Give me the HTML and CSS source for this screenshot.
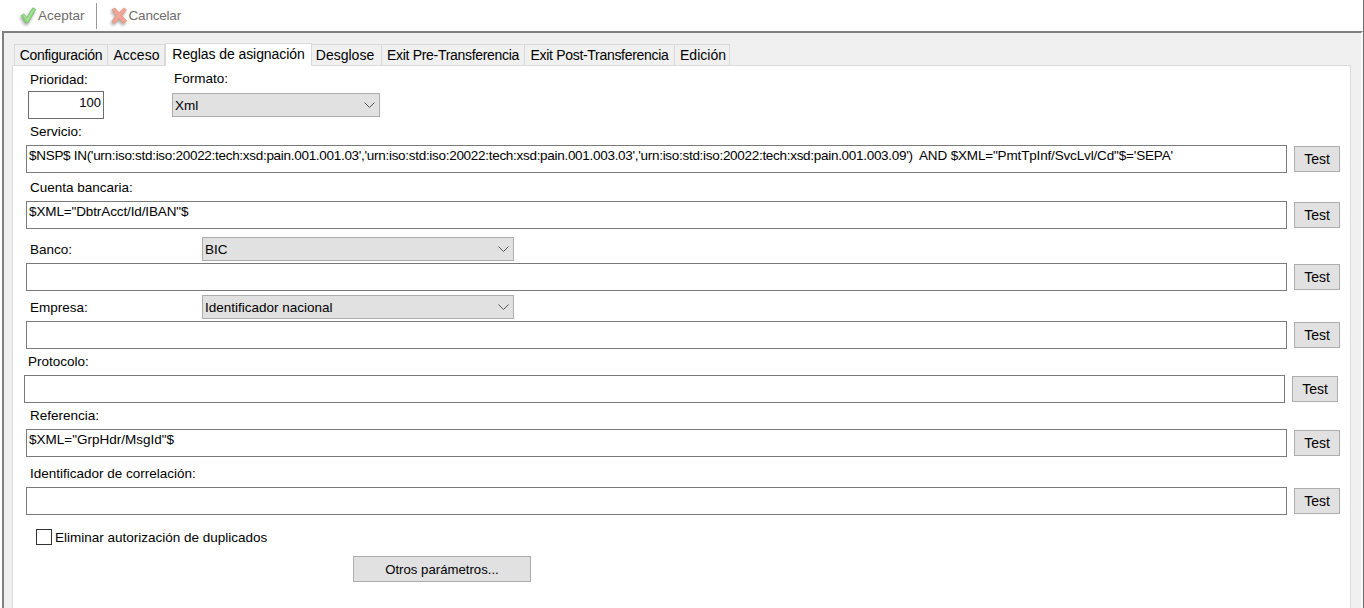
FILE: index.html
```html
<!DOCTYPE html>
<html lang="es">
<head>
<meta charset="utf-8">
<title>Reglas de asignación</title>
<link rel="stylesheet" href="styles.css">
</head>
<body>
<div class="toolbar">
  <span class="tool">
    <svg class="icon" width="18" height="19" viewBox="0 0 18 19"><path d="M2.200 9.500L5 7.800 7.800 11.500 13.800 1.800 16.800 3.300 9.300 16.800H6.700z" fill="#8ed27c" stroke="#79b96b" stroke-width=".7" stroke-linejoin="round"/><path d="M4 9.300l1-.6 3 4L14.300 3l1 .5-6.800 11.800z" fill="#a9e59a"/></svg>
    Aceptar
  </span>
  <span class="tool-sep"></span>
  <span class="tool tool-cancel">
    <svg class="icon" width="18" height="19" viewBox="0 0 18 19"><path d="M1.800 3.800L5 2 9.300 6.800 13.800 2 16.500 3.800 11.800 9.500 16.800 15 13.500 17.500 9 12.500 4.800 17.500 1.800 15.300 6.500 9.500z" fill="#f2a594" stroke="#e38f7c" stroke-width=".7" stroke-linejoin="round"/></svg>
    Cancelar
  </span>
</div>
<div class="window">
  <div class="tabs">
    <span class="tab t1">Configuración</span>
    <span class="tab t2">Acceso</span>
    <span class="tab active">Reglas de asignación</span>
    <span class="tab t4">Desglose</span>
    <span class="tab t5">Exit Pre-Transferencia</span>
    <span class="tab t6">Exit Post-Transferencia</span>
    <span class="tab t7">Edición</span>
  </div>
  <div class="panel">
    <div class="top-row">
      <div class="col-pri">
        <div class="lbl">Prioridad:</div>
        <div class="pri-box">100</div>
      </div>
      <div class="col-fmt">
        <div class="lbl">Formato:</div>
        <div class="select sel-fmt">Xml<svg class="chev" width="11" height="6" viewBox="0 0 11 6"><path d="M.5.5l5 5 5-5" fill="none" stroke="#555"/></svg></div>
      </div>
    </div>

    <div class="lbl lbl-row">Servicio:</div>
    <div class="field-row">
      <div class="input"><span class="narrow">$NSP$ IN('urn:iso:std:iso:20022:tech:xsd:pain.001.001.03','urn:iso:std:iso:20022:tech:xsd:pain.001.003.03','urn:iso:std:iso:20022:tech:xsd:pain.001.003.09')&nbsp;</span><span class="wide"> AND $XML="PmtTpInf/SvcLvl/Cd"$='SEPA'</span></div>
      <div class="btn btn-test">Test</div>
    </div>

    <div class="lbl lbl-row gap-7">Cuenta bancaria:</div>
    <div class="field-row">
      <div class="input"><span class="tighter">$XML="DbtrAcct/Id/IBAN"$</span></div>
      <div class="btn btn-test">Test</div>
    </div>

    <div class="sel-row gap-8">
      <div class="lbl sel-lbl">Banco:</div>
      <div class="select sel-wide">BIC<svg class="chev" width="11" height="6" viewBox="0 0 11 6"><path d="M.5.5l5 5 5-5" fill="none" stroke="#555"/></svg></div>
    </div>
    <div class="field-row tight">
      <div class="input"></div>
      <div class="btn btn-test">Test</div>
    </div>

    <div class="sel-row gap-4">
      <div class="lbl sel-lbl">Empresa:</div>
      <div class="select sel-wide">Identificador nacional<svg class="chev" width="11" height="6" viewBox="0 0 11 6"><path d="M.5.5l5 5 5-5" fill="none" stroke="#555"/></svg></div>
    </div>
    <div class="field-row tight">
      <div class="input"></div>
      <div class="btn btn-test">Test</div>
    </div>

    <div class="lbl lbl-row l-proto gap-5">Protocolo:</div>
    <div class="field-row shifted">
      <div class="input"></div>
      <div class="btn btn-test">Test</div>
    </div>

    <div class="lbl lbl-row gap-5">Referencia:</div>
    <div class="field-row">
      <div class="input">$XML="GrpHdr/MsgId"$</div>
      <div class="btn btn-test">Test</div>
    </div>

    <div class="lbl lbl-row gap-9">Identificador de correlación:</div>
    <div class="field-row">
      <div class="input"></div>
      <div class="btn btn-test">Test</div>
    </div>

    <div class="check-row"><span class="checkbox"></span><span>Eliminar autorización de duplicados</span></div>
    <div class="btn btn-more">Otros parámetros...</div>
  </div>
</div>
</body>
</html>
```
FILE: styles.css
```css
* { box-sizing: border-box; }
html, body { margin: 0; padding: 0; height: 100%; overflow: hidden; }
body { width: 1364px; height: 608px; background: #fff; border-right: 1px solid #6e6e6e; font-family: "Liberation Sans", Arial, sans-serif; font-size: 13.5px; color: #000; }
.toolbar { height: 31px; display: flex; align-items: center; padding-left: 19px; color: #6d6d6d; }
.tool { display: flex; align-items: center; }
.tool-cancel { letter-spacing: -.2px; }
.icon { margin-right: 1px; filter: drop-shadow(-1px 2px 1.5px rgba(0, 0, 0, .35)); }
.tool-sep { width: 1px; height: 26px; background: #999; margin: 0 13px 0 11px; }
.window { height: 577px; margin-left: 2px; border: 2px solid #808080; border-bottom: 0; border-right: 2px solid #f8f8f8; background: #f0f0f0; padding: 10px 10px 0 8px; overflow: hidden; }
.tabs { display: flex; height: 22px; align-items: flex-end; padding-left: 2px; font-size: 14px; }
.tab { height: 21px; line-height: 21px; text-align: center; border: 1px solid #d9d9d9; border-left: 0; border-bottom: 0; white-space: nowrap; }
.t1 { width: 94px; border-left: 1px solid #d9d9d9; letter-spacing: -.3px; }
.t2 { width: 57px; padding-left: 1px; }
.active { width: 147px; height: 23px; background: #fff; border-left: 1px solid #d9d9d9; margin-bottom: -1px; position: relative; line-height: 20px; z-index: 1; letter-spacing: -.08px; }
.t4 { width: 70px; padding-right: 3px; }
.t5 { width: 143px; letter-spacing: -.3px; }
.t6 { width: 150px; letter-spacing: -.3px; }
.t7 { width: 55px; padding-left: 2px; }
.panel { height: 544px; background: #fff; border: 1px solid #d9d9d9; border-bottom: 0; padding: 0 0 0 13px; }
.top-row { display: flex; height: 58px; padding-left: 2px; }
.col-pri { width: 144px; padding-top: 6px; }
.col-pri .lbl { padding-left: 2px; }
.col-fmt { padding-top: 5px; }
.col-fmt .lbl { padding-left: 2px; }
.lbl { height: 15px; line-height: 15px; white-space: nowrap; }
.pri-box { width: 76px; height: 28px; border: 1px solid #6e6e6e; margin-top: 4px; text-align: right; padding-right: 2px; line-height: 21px; font-size: 13px; }
.select { position: relative; height: 24px; line-height: 23px; background: #e1e1e1; border: 1px solid #adadad; padding-left: 2px; }
.sel-fmt { width: 208px; margin-top: 7px; }
.sel-wide { width: 312px; }
.chev { position: absolute; right: 4px; top: 8px; }
.lbl-row { padding-left: 4px; }
.l-proto { padding-left: 2px; }
.gap-4 { margin-top: 4px; }
.gap-5 { margin-top: 5px; }
.gap-7 { margin-top: 7px; }
.gap-8 { margin-top: 8px; }
.gap-9 { margin-top: 9px; }
.field-row { display: flex; align-items: center; gap: 7px; margin-top: 6px; }
.field-row.tight { margin-top: 2px; }
.field-row.shifted { margin-left: -2px; }
.input { width: 1261px; height: 28px; border: 1px solid #7a7a7a; padding-left: 2px; line-height: 20px; white-space: nowrap; overflow: hidden; background: #fff; }
.narrow { letter-spacing: -.294px; }
.wide { letter-spacing: -.16px; }
.tighter { letter-spacing: -.12px; }
.btn { background: #e1e1e1; border: 1px solid #adadad; text-align: center; }
.btn-test { width: 46px; height: 26px; line-height: 25px; font-size: 14px; }
.sel-row { display: flex; align-items: center; }
.sel-lbl { width: 176px; padding-left: 4px; }
.check-row { display: flex; align-items: center; margin-left: 10px; margin-top: 14px; }
.checkbox { width: 16px; height: 16px; border: 1px solid #333; background: #fff; margin-right: 3px; }
.btn-more { width: 178px; height: 26px; line-height: 25px; margin: 11px 0 0 327px; font-size: 13.2px; }
```
